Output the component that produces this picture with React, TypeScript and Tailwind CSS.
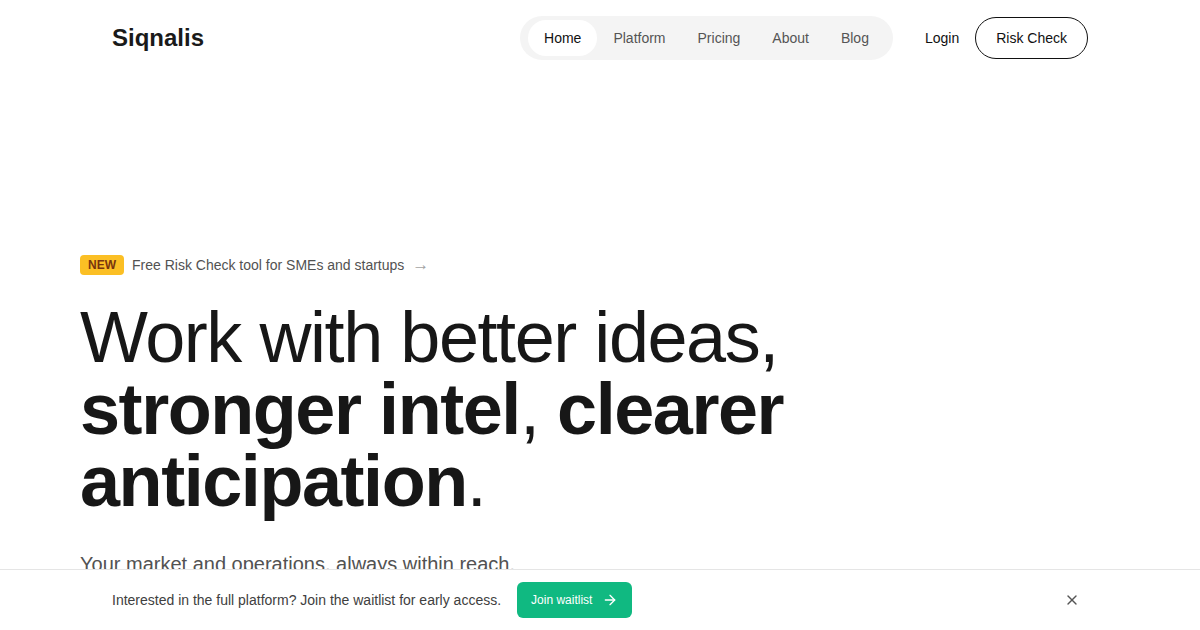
import React from "react";
import { ArrowRight, X } from "lucide-react";

export default function App() {
  return (
    <div className="min-h-screen bg-white font-['Liberation_Sans',Arial,sans-serif] text-[#171717] relative overflow-hidden h-[630px]">
      <header className="mx-auto w-[976px] h-[76px] flex items-center justify-between">
        <div className="text-[24px] font-bold leading-8 text-[#1a1a1a]">Siqnalis</div>
        <div className="flex items-center">
          <nav className="flex items-center bg-[#f4f4f4] rounded-full px-2 py-1">
            <a className="px-4 py-2 rounded-full bg-white text-[14px] leading-5 text-[#111]">Home</a>
            <a className="px-4 py-2 rounded-full text-[14px] leading-5 text-[#555]">Platform</a>
            <a className="px-4 py-2 rounded-full text-[14px] leading-5 text-[#555]">Pricing</a>
            <a className="px-4 py-2 rounded-full text-[14px] leading-5 text-[#555]">About</a>
            <a className="px-4 py-2 rounded-full text-[14px] leading-5 text-[#555]">Blog</a>
          </nav>
          <a className="ml-8 text-[14px] leading-5 text-[#111]">Login</a>
          <button className="ml-4 px-5 py-2.5 rounded-full border border-[#111] text-[14px] leading-5 text-[#111]">Risk Check</button>
        </div>
      </header>

      <main className="mx-auto w-[1040px] pt-[179px]">
        <div className="flex items-center h-5">
          <span className="bg-[#fbbf24] text-[#78350f] text-[12px] font-bold leading-5 px-2 rounded">NEW</span>
          <span className="ml-2 text-[14px] leading-5 text-[#525252]">Free Risk Check tool for SMEs and startups</span>
          <span className="ml-2 text-[17px] leading-5 text-[#a3a3a3]">→</span>
        </div>
        <h1 className="mt-[26px] text-[72px] leading-[72px] tracking-[-0.02em] text-[#171717]">
          <span className="font-normal">Work with better ideas,</span>
          <br />
          <span className="font-bold">stronger intel</span>
          <span className="font-normal">, </span>
          <span className="font-bold">clearer</span>
          <br />
          <span className="font-bold">anticipation</span>
          <span className="font-normal">.</span>
        </h1>
        <p className="mt-[33px] text-[20px] leading-7 text-[#525252]">Your market and operations, always within reach.</p>
      </main>

      <div className="absolute left-0 right-0 bottom-0 h-[61px] bg-white border-t border-[#e5e5e5]">
        <div className="mx-auto w-[976px] h-full flex items-center justify-between">
          <div className="flex items-center">
            <span className="text-[14px] leading-5 text-[#404040]">Interested in the full platform? Join the waitlist for early access.</span>
            <button className="ml-4 h-9 px-[14px] rounded-md bg-[#10b981] text-white text-[12px] flex items-center gap-2.5">
              Join waitlist
              <ArrowRight size={16} strokeWidth={2} />
            </button>
          </div>
          <button className="p-1 mr-1 text-[#555]">
            <X size={16} strokeWidth={2} />
          </button>
        </div>
      </div>
    </div>
  );
}
